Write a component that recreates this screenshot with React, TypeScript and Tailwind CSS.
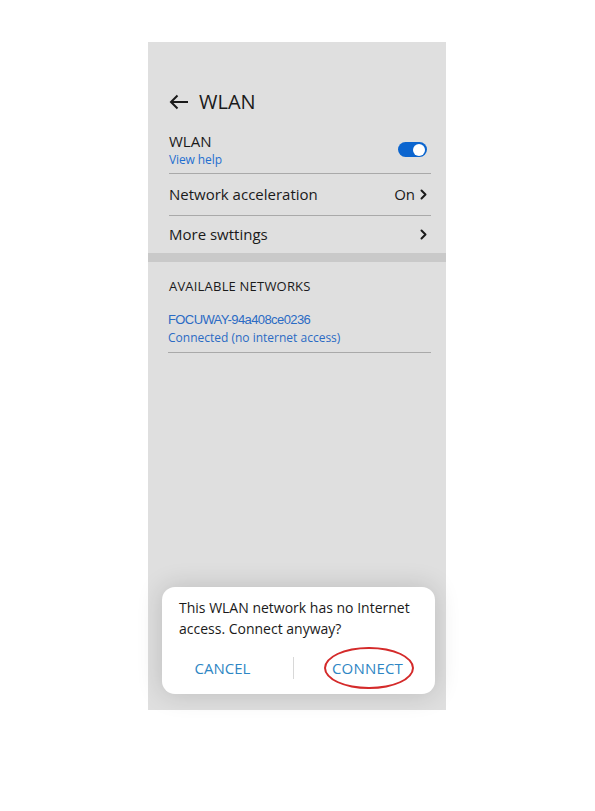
import React from "react";

const font = { fontFamily: '"Open Sans", "Noto Sans", sans-serif' };

function Chevron() {
  return (
    <svg width="7" height="11" viewBox="0 0 7 11" className="ml-[5px]">
      <polyline points="1.5,1.5 5.5,5.5 1.5,9.5" fill="none" stroke="#1a1a1a" strokeWidth="2" strokeLinecap="round" strokeLinejoin="round" />
    </svg>
  );
}

export default function App() {
  return (
    <div className="w-[595px] h-[811px] bg-white pt-[42px] pl-[148px]" style={font}>
      <div className="w-[298px] h-[668px] bg-[#dfdfdf] flex flex-col">
        <div className="pl-[21px] pr-[15px]">
          {/* header */}
          <div className="pt-[46px] h-[74px] flex items-center gap-[11px]">
            <svg width="19" height="16" viewBox="0 0 19 16">
              <polyline points="8.5,1.5 2,8 8.5,14.5" fill="none" stroke="#1a1a1a" strokeWidth="2" strokeLinejoin="miter" />
              <line x1="2" y1="8" x2="19" y2="8" stroke="#1a1a1a" strokeWidth="2" />
            </svg>
            <span className="text-[20px] leading-[28px] text-[#1a1a1a]">WLAN</span>
          </div>
          {/* WLAN row */}
          <div className="h-[58px] flex items-center justify-between border-b border-[#a9a9a9] pt-[10px]">
            <div className="flex flex-col">
              <span className="text-[15px] leading-[19px] text-[#1a1a1a]">WLAN</span>
              <span className="text-[12px] leading-[17px] text-[#1f6fd0] tracking-[-0.1px]">View help</span>
            </div>
            <div className="w-[29px] h-[15px] rounded-full bg-[#0b65cf] flex items-center justify-end pr-[2px] mr-[4px]">
              <div className="w-[12px] h-[12px] rounded-full bg-white" />
            </div>
          </div>
          <div className="h-[42px] flex items-center justify-between border-b border-[#a9a9a9]">
            <span className="text-[15px] text-[#1a1a1a]">Network acceleration</span>
            <span className="flex items-center text-[15px] text-[#1a1a1a] mr-[4px]">On<Chevron /></span>
          </div>
          <div className="h-[37px] flex items-center justify-between">
            <span className="text-[15px] text-[#1a1a1a]">More swttings</span>
            <span className="flex items-center mr-[4px]"><Chevron /></span>
          </div>
        </div>
        <div className="h-[9px] bg-[#c9c9c9]" />
        <div className="pl-[21px] pr-[15px]">
          <div className="h-[48px] pt-[2px] flex items-center">
            <span className="text-[13px] text-[#1a1a1a] tracking-[0.2px]">AVAILABLE NETWORKS</span>
          </div>
          <div className="pt-[1px] pb-[5px] border-b border-[#a9a9a9] flex flex-col -ml-[1px]">
            <span className="text-[13px] leading-[18px] text-[#2b6bc4] tracking-[-0.6px]" style={{ fontFamily: '"Liberation Sans", sans-serif' }}>FOCUWAY-94a408ce0236</span>
            <span className="text-[12px] leading-[18px] text-[#2b6bc4]">Connected (no internet access)</span>
          </div>
        </div>
        <div className="flex-1" />
        <div className="pl-[14px] pr-[11px] pb-[16px]">
          <div className="bg-white rounded-[13px] shadow-[0_0_26px_rgba(0,0,0,0.16)] pt-[10px] pb-[9px]">
            <p className="px-[17px] text-[14px] leading-[21px] text-[#1a1a1a]">
              This WLAN network has no Internet access. Connect anyway?
            </p>
            <div className="mt-[12px] flex items-center h-[34px]">
              <div className="w-[131px] flex justify-center pr-[10px]">
                <span className="text-[15px] text-[#2e86c4]">CANCEL</span>
              </div>
              <div className="w-px h-[22px] bg-[#d8d8d8]" />
              <div className="flex-1 flex justify-center pl-[6px]">
                <span className="relative text-[15px] text-[#2e86c4] tracking-[0.2px]">
                  CONNECT
                  <span className="absolute left-[-8px] right-[-11px] top-[-10px] bottom-[-10px] border-2 border-[#d42a2a] rounded-[50%]" />
                </span>
              </div>
            </div>
          </div>
        </div>
      </div>
    </div>
  );
}
